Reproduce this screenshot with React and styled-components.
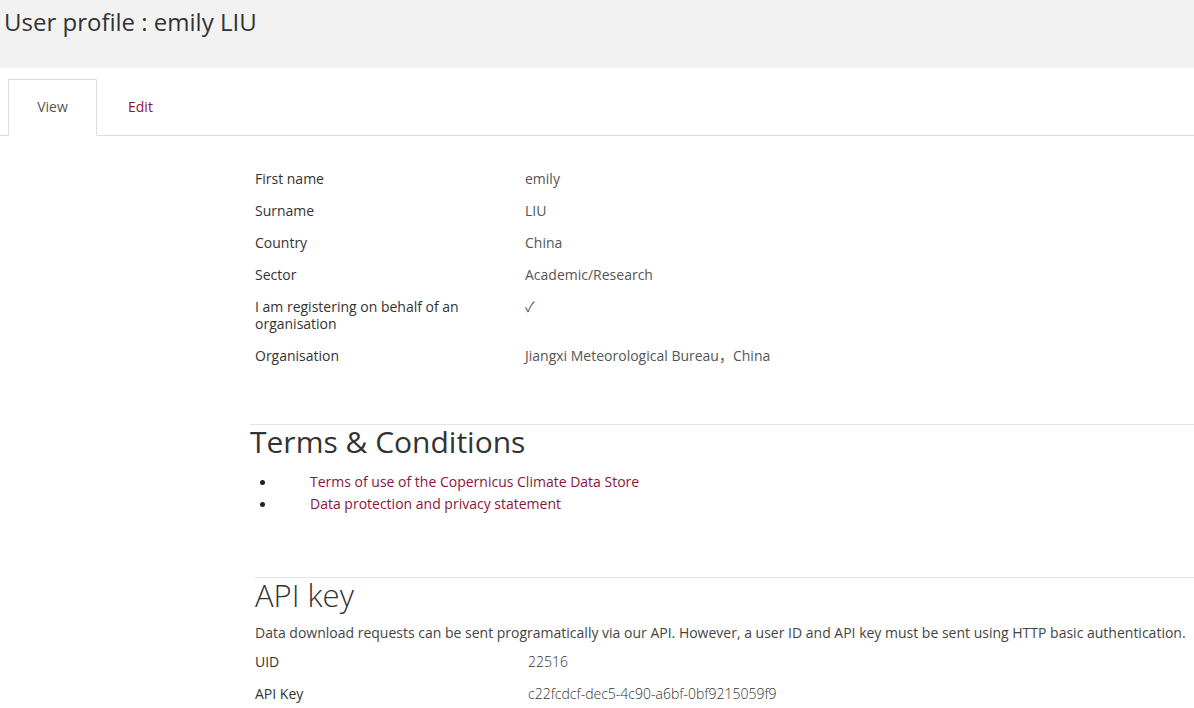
import React from 'react';
import styled, { createGlobalStyle } from 'styled-components';

const GlobalStyle = createGlobalStyle`
    body {
        margin: 0;
        background: #fff;
        font-family: "Open Sans", "Noto Sans CJK SC", sans-serif;
        color: #333;
    }
`;

const Header = styled.header`
    background-color: #f2f2f2;
    height: 68px;
    padding: 5px 4px 0;
    box-sizing: border-box;
`;

const Title = styled.h1`
    margin: 0;
    font-size: 24px;
    font-weight: 400;
    line-height: 34px;
    color: #333;
`;

const TabBar = styled.nav`
    display: flex;
    margin-top: 11px;
    padding-left: 8px;
    height: 56px;
    border-bottom: 1px solid #ddd;
`;

const Tab = styled.a`
    display: flex;
    align-items: center;
    justify-content: center;
    width: ${props => props.active ? '89px' : 'auto'};
    padding: ${props => props.active ? '0 0 3px' : '0 0 2px 31px'};
    margin-bottom: ${props => props.active ? '-1px' : '0'};
    font-size: 14px;
    color: ${props => props.active ? '#555' : '#8a1538'};
    background: ${props => props.active ? '#fff' : 'transparent'};
    border: ${props => props.active ? '1px solid #ddd' : 'none'};
    border-bottom: ${props => props.active ? '1px solid #fff' : 'none'};
    box-sizing: border-box;
    text-decoration: none;
`;

const Content = styled.main`
    padding: 34px 0 0 250px;
`;

const Details = styled.dl`
    margin: 0 0 0 5px;
    display: grid;
    grid-template-columns: 270px 1fr;
    font-size: 14px;
    line-height: 17px;
`;

const Label = styled.dt`
    margin: 0;
    padding: 0 60px 15px 0;
    color: #333;
`;

const Value = styled.dd`
    margin: 0;
    padding-bottom: 15px;
    color: #555;
`;

const Section = styled.section`
    margin-top: ${props => props.gap};
    margin-left: ${props => props.indent || '0'};
    border-top: 1px solid #e4e4e4;
`;

const SectionTitle = styled.h2`
    margin: 0;
    font-size: ${props => props.light ? '31px' : '30px'};
    font-weight: ${props => props.light ? 300 : 400};
    line-height: 34px;
    color: #333;
`;

const LinkList = styled.ul`
    margin: 12px 0 0;
    padding: 0 0 0 10px;
    list-style: none;
    font-size: 14px;
    line-height: 22px;
`;

const LinkItem = styled.li`
    display: flex;
    align-items: center;

    &::before {
        content: '';
        width: 5px;
        height: 5px;
        border-radius: 50%;
        background: #222;
        margin-right: 45px;
    }
`;

const Link = styled.a`
    color: #8a1538;
    text-decoration: none;
`;

const Intro = styled.p`
    margin: 11px 0 0;
    font-size: 14px;
    font-weight: 400;
    line-height: 20px;
    color: #444;
`;

const KeyTable = styled.dl`
    margin: 9px 0 0;
    display: grid;
    grid-template-columns: 273px 1fr;
    row-gap: 12px;
    font-size: 14px;
    line-height: 20px;
`;

const KeyLabel = styled.dt`
    margin: 0;
    color: #333;
`;

const KeyValue = styled.dd`
    margin: 0;
    font-weight: 300;
    color: #333;
`;

const profile = [
    ['First name', 'emily'],
    ['Surname', 'LIU'],
    ['Country', 'China'],
    ['Sector', 'Academic/Research'],
    ['I am registering on behalf of an organisation', '✓'],
    ['Organisation', 'Jiangxi Meteorological Bureau，China'],
];

export default function App() {
    return (
        <>
            <GlobalStyle />
            <Header>
                <Title>User profile : emily LIU</Title>
            </Header>
            <TabBar>
                <Tab active>View</Tab>
                <Tab>Edit</Tab>
            </TabBar>
            <Content>
                <Details>
                    {profile.map(([label, value]) => (
                        <React.Fragment key={label}>
                            <Label>{label}</Label>
                            <Value>{value}</Value>
                        </React.Fragment>
                    ))}
                </Details>

                <Section gap="45px">
                    <SectionTitle>Terms &amp; Conditions</SectionTitle>
                    <LinkList>
                        <LinkItem><Link>Terms of use of the Copernicus Climate Data Store</Link></LinkItem>
                        <LinkItem><Link>Data protection and privacy statement</Link></LinkItem>
                    </LinkList>
                </Section>

                <Section gap="62px" indent="5px">
                    <SectionTitle light>API key</SectionTitle>
                    <Intro>Data download requests can be sent programatically via our API. However, a user ID and API key must be sent using HTTP basic authentication.</Intro>
                    <KeyTable>
                        <KeyLabel>UID</KeyLabel>
                        <KeyValue>22516</KeyValue>
                        <KeyLabel>API Key</KeyLabel>
                        <KeyValue>c22fcdcf-dec5-4c90-a6bf-0bf9215059f9</KeyValue>
                    </KeyTable>
                </Section>
            </Content>
        </>
    );
}
